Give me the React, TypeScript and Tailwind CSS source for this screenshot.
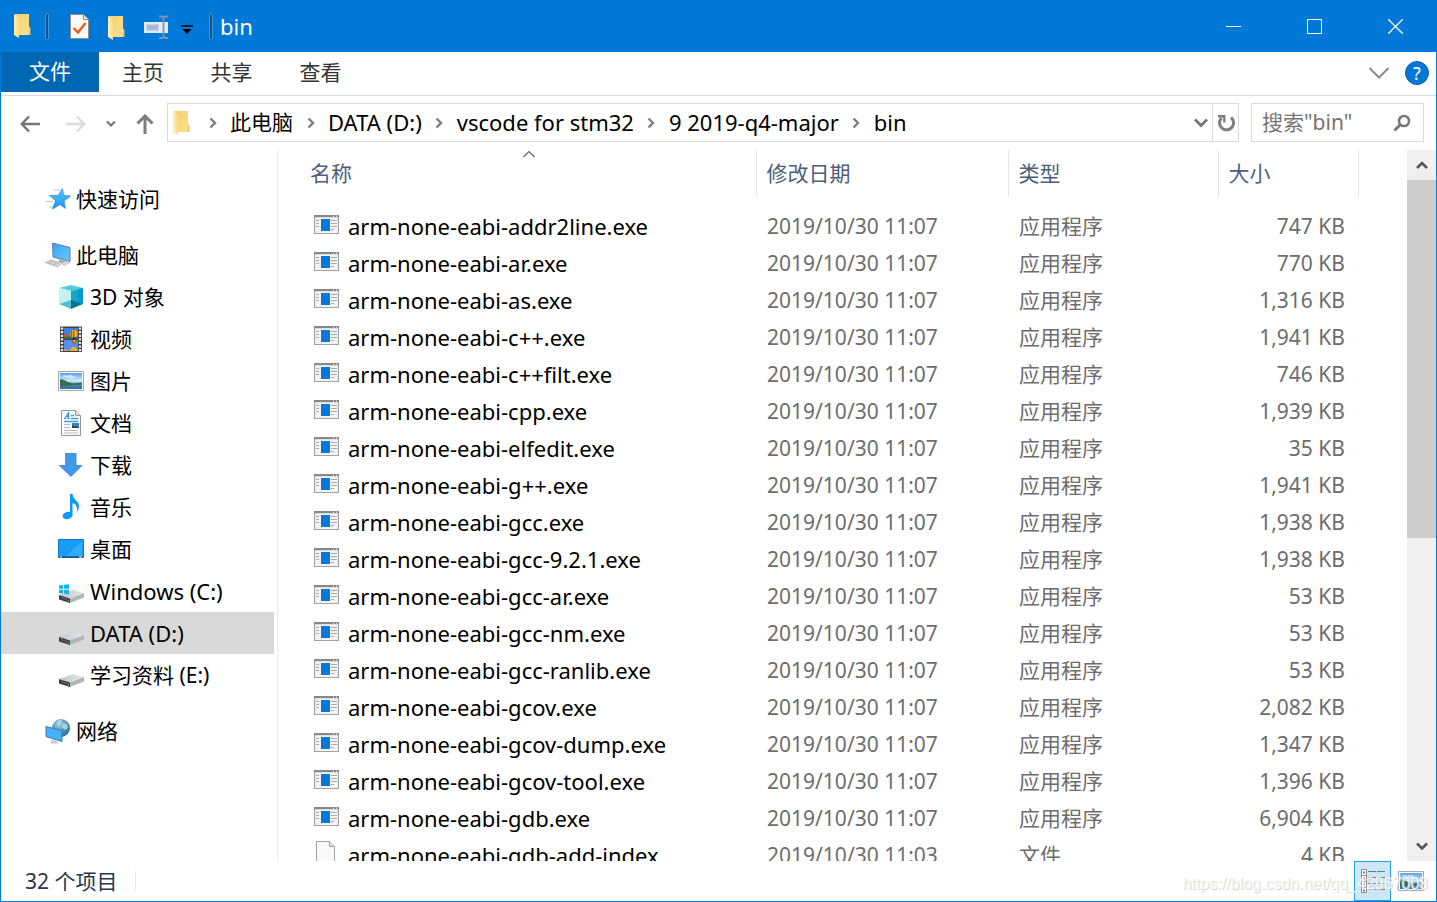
import React from "react";

type IconProps = { className?: string };

const FolderIcon = ({ className }: IconProps) => (
  <svg width="18" height="24" viewBox="0 0 18 24" className={className} aria-hidden="true">
    <defs>
      <linearGradient id="folderBack" x1="0" y1="0" x2="1" y2="1">
        <stop offset="0" stopColor="#f4cf72" />
        <stop offset="1" stopColor="#ffe08c" />
      </linearGradient>
      <linearGradient id="folderFront" x1="0" y1="0" x2="1" y2="0">
        <stop offset="0" stopColor="#fff1b5" />
        <stop offset="1" stopColor="#f9dd85" />
      </linearGradient>
    </defs>
    <path d="M1 0h14v12l1 2v7H4L1 20z" fill="url(#folderBack)" />
    <path d="M1 0l4 4v20l-5-3V1z" fill="url(#folderFront)" />
    <path d="M15.500 13l1 1v7h-2z" fill="#eec35e" />
  </svg>
);

const CheckPageIcon = () => (
  <svg width="20" height="26" viewBox="0 0 20 26" aria-hidden="true">
    <path d="M.5.500h13l5 5v19h-18z" fill="#fafafa" stroke="#8d8d8d" />
    <path d="M13.500.500v5h5" fill="#e2e2e2" stroke="#8d8d8d" />
    <path d="M3.500 14l4.500 4.500L15.500 9" fill="none" stroke="#f0591c" strokeWidth="2.400" />
  </svg>
);

const RenameIcon = () => (
  <svg width="25" height="24" viewBox="0 0 25 24" aria-hidden="true">
    <path d="M0 7h24v11H0z" fill="#e3ebf7" />
    <path d="M2.500 9.500h12v6h-12z" fill="#a9b9d6" />
    <path d="M19.500 2v21M15 1.500h3l1.500 1 1.500-1h3M15 23h3l1.500-1 1.500 1h3" fill="none" stroke="#7f93b4" strokeWidth="1.800" />
  </svg>
);

const Chevron = ({ className }: IconProps) => (
  <svg width="8" height="12" viewBox="0 0 8 12" className={className} aria-hidden="true">
    <path d="M1.500 1.500L6 6l-4.500 4.500" fill="none" stroke="#7d7d7d" strokeWidth="2.400" />
  </svg>
);

const StarIcon = () => (
  <svg width="26" height="26" viewBox="0 0 26 26" aria-hidden="true">
    <defs>
      <linearGradient id="star" x1="0" y1="0" x2="0" y2="1">
        <stop offset="0" stopColor="#5cc6fb" />
        <stop offset="1" stopColor="#1d92e8" />
      </linearGradient>
    </defs>
    <path d="M8 4h7M3 10h5M1 15.500h7M4 21h4" stroke="#9fd0f2" strokeWidth="1.200" />
    <path d="M17.500 2.500l1 7 7 .5-6.500 5 1.500 7.500-5.500-4-7.500 4.500 3-8L5 9.500l8.500-.2z" fill="url(#star)" stroke="#2b8fd8" strokeWidth=".8" />
  </svg>
);

const ComputerIcon = () => (
  <svg width="28" height="26" viewBox="0 0 28 26" aria-hidden="true">
    <defs>
      <linearGradient id="pcScreen" x1="0" y1="0" x2="1" y2="1">
        <stop offset="0" stopColor="#2ea5f8" />
        <stop offset="1" stopColor="#70c8ff" />
      </linearGradient>
    </defs>
    <path d="M8.500 1L26 5.500v14L9 15z" fill="url(#pcScreen)" stroke="#64809a" strokeWidth="1" />
    <path d="M15 17.500l6 1.500-1 2-5-1z" fill="#9da5ad" />
    <path d="M17 21l7-2 2 1.500-6 3z" fill="#d7dbdf" stroke="#a5abb0" strokeWidth=".6" />
    <path d="M1 20.500l6-2.500 11 3L14 25z" fill="#e0e3e6" stroke="#b0b6bb" strokeWidth=".8" />
    <path d="M3.500 20.500l10 3M6 19.300l10 3M9 18.500l-5 3M13 20l-4 3" stroke="#a9b0b6" strokeWidth=".7" />
  </svg>
);

const CubeIcon = () => (
  <svg width="26" height="26" viewBox="0 0 26 26" aria-hidden="true">
    <path d="M1 4L13 1l12 3-12 3z" fill="#56cbdc" />
    <path d="M1 4l12 3v10L1 20z" fill="#c7f1f0" />
    <path d="M25 4L13 7v10l12 3z" fill="#12a5c4" />
    <path d="M25 4l-5 1.300V19l5 1z" fill="#0896d4" />
    <path d="M1 20l12-4v9z" fill="#51c2c8" />
    <path d="M25 20l-12-4v9z" fill="#08758f" />
  </svg>
);

const VideoIcon = () => (
  <svg width="22" height="26" viewBox="0 0 22 26" aria-hidden="true">
    <path d="M0 .5h22V26H0z" fill="#3f3f3f" />
    <path d="M4 2h14v11H4z" fill="#4080e0" />
    <path d="M4 14h14v11H4z" fill="#5590ec" />
    <path d="M2 1.500v24M20 1.500v24" stroke="#e8e8e8" strokeWidth="2.400" strokeDasharray="2.200 1.400" />
    <path d="M4 10l3-1 3 2 4 1 4-1v2H4z" fill="#3c6b34" />
    <ellipse cx="13.800" cy="7.500" rx="3.600" ry="3.800" fill="#f0b51d" />
    <path d="M13.800 3.700v7.600M11.600 4.800v5" stroke="#a73b23" />
    <path d="M13 11.500h2v1.500h-2z" fill="#332714" />
    <circle cx="6" cy="9.500" r="1.800" fill="#e14b43" />
    <path d="M11.500 14h5.500l-2 4h-1.500z" fill="#b63c34" />
    <path d="M13 14h2.500l-1 4z" fill="#efb32a" />
    <path d="M10 25q0-4 3.500-4t3.500 4z" fill="#efb32a" />
    <path d="M4 23l4 1 1 1H4z" fill="#c9a746" />
  </svg>
);

const PictureIcon = () => (
  <svg width="26" height="20" viewBox="0 0 26 20" aria-hidden="true">
    <defs>
      <linearGradient id="sky" x1="0" y1="0" x2="0" y2="1">
        <stop offset="0" stopColor="#5a9fee" />
        <stop offset=".5" stopColor="#d4edf8" />
        <stop offset=".7" stopColor="#508db4" />
        <stop offset="1" stopColor="#2b6b9b" />
      </linearGradient>
    </defs>
    <path d="M.5.500h25v19H.5z" fill="#fff" stroke="#a9a9a9" />
    <path d="M2 2h22v16H2z" fill="url(#sky)" />
    <path d="M2 8l3 .5 5 2.500 5 1.500 9-1v2l-12 1-10 1z" fill="#386c55" />
    <path d="M4 5.500q2-2 5-.5 4-2 7 .5l3 1-6 1z" fill="#eef6fd" opacity=".7" />
  </svg>
);

const DocumentIcon = () => (
  <svg width="20" height="26" viewBox="0 0 20 26" aria-hidden="true">
    <path d="M.5.500h14l5 5v20H.5z" fill="#fbfbfb" stroke="#969696" />
    <path d="M14.500.500v5h5" fill="#e3e3e3" stroke="#969696" />
    <path d="M3 8.500h2M6.500 8.500h2M4 8.500L7.500 3v5.500M5.500 6.500h2" fill="none" stroke="#2a8cd8" strokeWidth="1.200" />
    <path d="M10 5.500h3M10 8.500h7M3 11.500h14" stroke="#3b9fe6" strokeWidth="1.300" />
    <path d="M3 14.500h6M3 17.500h6M3 20.500h14M3 23h14" stroke="#b9b9b9" />
    <path d="M11 13h7v5h-7z" fill="#3b7ec0" />
    <path d="M11 15.500l7 1.500v1h-7z" fill="#274c50" />
  </svg>
);

const DownloadIcon = () => (
  <svg width="24" height="24" viewBox="0 0 24 24" aria-hidden="true">
    <path d="M6.500.500h10.500v12h6L12 23.500.5 12.500h6z" fill="#3f98e8" stroke="#2f84d0" strokeWidth=".8" />
  </svg>
);

const MusicIcon = () => (
  <svg width="18" height="26" viewBox="0 0 18 26" aria-hidden="true">
    <ellipse cx="5.500" cy="21.500" rx="5" ry="3.600" fill="#0a9bf5" transform="rotate(-12 5.500 21.500)" />
    <path d="M8 0h2.500c.5 6 6.500 7 6.500 12 0 3-1.500 5-2.500 6 1.500-5-.5-8-4-9v12.500H8z" fill="#0a9bf5" />
  </svg>
);

const DesktopIcon = () => (
  <svg width="26" height="20" viewBox="0 0 26 20" aria-hidden="true">
    <path d="M.5.500h25v18H.5z" fill="#149cf9" stroke="#1878bd" />
    <path d="M8 17L24 2v15z" fill="#35abfc" />
    <path d="M1 18h24" stroke="#13557f" strokeWidth="1.500" />
    <path d="M2 18h2M21 18h3" stroke="#fff" />
  </svg>
);

const DriveIcon = ({ windows = false }: { windows?: boolean }) => (
  <svg width="26" height="26" viewBox="0 -3 26 26" aria-hidden="true">
    <defs>
      <linearGradient id="driveTop" x1="0" y1="0" x2="1" y2="0">
        <stop offset="0" stopColor="#c4c5c7" />
        <stop offset="1" stopColor="#e6e7e9" />
      </linearGradient>
    </defs>
    <path d="M1 14l14-5 11 3-14 5.500z" fill="url(#driveTop)" />
    <path d="M12 17.500L26 12v4.500L12 22z" fill="#b4b5b8" />
    <path d="M1 14l11 3.500V22L1 18.500z" fill="#3d3e40" />
    <path d="M3 16.500l6 2" stroke="#6b6d6e" strokeWidth="1" />
    <path d="M9.500 18.500l1.500.500v1.500l-1.500-.500z" fill="#38b54a" />
    {windows && (
      <path d="M1 4.500l4-.6v3.900H1zM6 3.800l5-.6v4.600H6zM1 8.800h4v3.900l-4-.6zM6 8.800h5v4.600l-5-.6z" fill="#10b5f0" />
    )}
  </svg>
);

const NetworkIcon = () => (
  <svg width="26" height="26" viewBox="0 0 26 26" aria-hidden="true">
    <defs>
      <radialGradient id="globe" cx=".4" cy=".3" r=".8">
        <stop offset="0" stopColor="#a5d5e8" />
        <stop offset=".6" stopColor="#4789ac" />
        <stop offset="1" stopColor="#2d6a8f" />
      </radialGradient>
    </defs>
    <circle cx="16" cy="10" r="9" fill="url(#globe)" />
    <path d="M12 4q3-3 5-2l-1 3-3 2zM18 5l4 1 1 4-3 2-3-3z" fill="#c0e2e9" opacity=".75" />
    <path d="M1 8.500l16 4v11L1 18.500z" fill="#45b2fb" stroke="#38719b" strokeWidth=".9" />
    <path d="M7 21.500l5 1.500 1 2.500H5z" fill="#c5cbd0" />
  </svg>
);

const ExeIcon = () => (
  <svg width="25" height="20" viewBox="0 0 25 20" aria-hidden="true">
    <path d="M.5.500h24v18H.5z" fill="#f3f3f3" stroke="#a0a2a4" strokeWidth="1.200" />
    <path d="M0 0h25v2.200H0z" fill="#85888a" />
    <path d="M19 1.200h1M22 1.200h1" stroke="#fff" />
    <path d="M7 4h9v12H7z" fill="#0a78d8" />
    <path d="M2 5.500h3M2 8.500h3M2 11.500h3M17 5.500h6M17 8.500h6M17 11.500h6M17 14.500h3" stroke="#aaa" strokeWidth="1.200" />
  </svg>
);

const FileIcon = () => (
  <svg width="20" height="26" viewBox="0 0 20 26" aria-hidden="true">
    <path d="M.5.500h13l5 5v20H.5z" fill="#f9f9f9" stroke="#a2a2a2" />
    <path d="M13.500.500v5h5" fill="#e4e4e4" stroke="#a2a2a2" />
  </svg>
);

const DetailsIcon = () => (
  <svg width="24" height="24" viewBox="0 0 24 24" aria-hidden="true">
    <path d="M.5.500h5v23h-5z" fill="#fff" stroke="#8b8b8b" />
    <path d="M1 6.500h5M1 12.500h5M1 18.500h5" stroke="#8b8b8b" />
    <path d="M2 3.500h2M2 21.500h2" stroke="#6f7f7f" strokeWidth="2" />
    <path d="M2 9.500h2M2 15.500h2" stroke="#d33f2f" strokeWidth="2" />
    <path d="M7 2.500h8M16 2.500h8M7 8.500h8M16 8.500h8M7 14.500h8M16 14.500h8M7 20.500h8M16 20.500h8" stroke="#6f7a80" />
  </svg>
);

const ArrowHead = ({ up = false }: { up?: boolean }) => (
  <svg width="12" height="10" viewBox="0 0 12 10" aria-hidden="true">
    <path d={up ? "M1 8l5-5 5 5" : "M1 2.500l5 5 5-5"} fill="none" stroke="#555" strokeWidth="2.600" />
  </svg>
);

const files: [string, string, string, string][] = [
  ["arm-none-eabi-addr2line.exe", "11:07", "应用程序", "747 KB"],
  ["arm-none-eabi-ar.exe", "11:07", "应用程序", "770 KB"],
  ["arm-none-eabi-as.exe", "11:07", "应用程序", "1,316 KB"],
  ["arm-none-eabi-c++.exe", "11:07", "应用程序", "1,941 KB"],
  ["arm-none-eabi-c++filt.exe", "11:07", "应用程序", "746 KB"],
  ["arm-none-eabi-cpp.exe", "11:07", "应用程序", "1,939 KB"],
  ["arm-none-eabi-elfedit.exe", "11:07", "应用程序", "35 KB"],
  ["arm-none-eabi-g++.exe", "11:07", "应用程序", "1,941 KB"],
  ["arm-none-eabi-gcc.exe", "11:07", "应用程序", "1,938 KB"],
  ["arm-none-eabi-gcc-9.2.1.exe", "11:07", "应用程序", "1,938 KB"],
  ["arm-none-eabi-gcc-ar.exe", "11:07", "应用程序", "53 KB"],
  ["arm-none-eabi-gcc-nm.exe", "11:07", "应用程序", "53 KB"],
  ["arm-none-eabi-gcc-ranlib.exe", "11:07", "应用程序", "53 KB"],
  ["arm-none-eabi-gcov.exe", "11:07", "应用程序", "2,082 KB"],
  ["arm-none-eabi-gcov-dump.exe", "11:07", "应用程序", "1,347 KB"],
  ["arm-none-eabi-gcov-tool.exe", "11:07", "应用程序", "1,396 KB"],
  ["arm-none-eabi-gdb.exe", "11:07", "应用程序", "6,904 KB"],
  ["arm-none-eabi-gdb-add-index", "11:03", "文件", "4 KB"],
];

const places: { label: string; icon: React.ReactNode; selected?: boolean }[] = [
  { label: "3D 对象", icon: <CubeIcon /> },
  { label: "视频", icon: <VideoIcon /> },
  { label: "图片", icon: <PictureIcon /> },
  { label: "文档", icon: <DocumentIcon /> },
  { label: "下载", icon: <DownloadIcon /> },
  { label: "音乐", icon: <MusicIcon /> },
  { label: "桌面", icon: <DesktopIcon /> },
  { label: "Windows (C:)", icon: <DriveIcon windows /> },
  { label: "DATA (D:)", icon: <DriveIcon />, selected: true },
  { label: "学习资料 (E:)", icon: <DriveIcon /> },
];

const crumbs = ["此电脑", "DATA (D:)", "vscode for stm32", "9 2019-q4-major", "bin"];

// Latin labels are set one size up so that they sit evenly beside the Chinese ones.
const labelSize = (text: string) => (/^[ -~]+$/.test(text) ? "text-[22px]" : "text-[21px]");

const RootPlace = ({ label, icon }: { label: string; icon: React.ReactNode }) => (
  <a href="#" className="flex h-[42px] items-center pl-[42px]">
    <span className="flex w-[33px] shrink-0 justify-center pr-1">{icon}</span>
    {label}
  </a>
);

function TitleBar() {
  return (
    <header className="flex h-[52px] shrink-0 items-center bg-[#0078d7] pl-[13px] text-white">
      <FolderIcon />
      <span className="ml-[13px] h-[27px] w-1 rounded-sm border border-[#3f95dd] bg-[#1a5088]" />
      <button aria-label="属性" className="ml-[21px] pt-[2px]"><CheckPageIcon /></button>
      <button aria-label="新建文件夹" className="ml-[18px] pt-1"><FolderIcon /></button>
      <button aria-label="重命名" className="ml-[18px] pt-[2px]"><RenameIcon /></button>
      <button aria-label="自定义快速访问工具栏" className="ml-3 pt-2">
        <svg width="12" height="10" viewBox="0 0 12 10" aria-hidden="true">
          <path d="M0 1h12" stroke="#000" strokeWidth="1.500" />
          <path d="M1.500 4h9L6 9z" fill="#000" />
        </svg>
      </button>
      <span className="ml-4 h-[27px] w-1 rounded-sm border border-[#3f95dd] bg-[#1a5088]" />
      <h1 className="ml-[7px] text-[22px]">bin</h1>
      <div className="ml-auto flex self-stretch">
        <button aria-label="最小化" className="flex w-[81px] items-center justify-center">
          <svg width="15" height="15" aria-hidden="true"><path d="M0 7.500h15" stroke="#fff" /></svg>
        </button>
        <button aria-label="最大化" className="flex w-[81px] items-center justify-center">
          <svg width="15" height="15" aria-hidden="true"><path d="M.5.500h14v14H.5z" stroke="#fff" fill="none" /></svg>
        </button>
        <button aria-label="关闭" className="flex w-[81px] items-center justify-center">
          <svg width="15" height="15" aria-hidden="true"><path d="M0 0l15 15M15 0L0 15" stroke="#fff" strokeWidth="1.300" /></svg>
        </button>
      </div>
    </header>
  );
}

function Ribbon() {
  return (
    <div className="flex h-11 shrink-0 items-start border-b border-[#dadbdc] pr-[7px] text-[#333]">
      <button className="h-10 w-[98px] bg-[#0067b3] pb-[2px] text-white">文件</button>
      <button className="h-10 w-[88px]">主页</button>
      <button className="h-10 w-[89px]">共享</button>
      <button className="h-10 w-[89px]">查看</button>
      <button aria-label="展开功能区" className="ml-auto flex h-[42px] items-center">
        <svg width="22" height="14" viewBox="0 0 22 14" aria-hidden="true">
          <path d="M1.500 2L11 11.500 20.500 2" fill="none" stroke="#8a8a8a" strokeWidth="2" />
        </svg>
      </button>
      <button aria-label="帮助" className="ml-[15px] flex h-[42px] items-center">
        <span className="flex size-6 items-center justify-center rounded-full border border-[#0b5ea8] bg-[#0078d7] text-[18px] leading-none text-white">?</span>
      </button>
    </div>
  );
}

function AddressBar() {
  return (
    <div className="flex h-[54px] shrink-0 items-start pr-3 pt-[7px]">
      <div className="flex h-[39px] w-[166px] shrink-0 items-center pl-[19px] pt-[2px]">
        <button aria-label="后退">
          <svg width="20" height="18" viewBox="0 0 20 18" aria-hidden="true">
            <path d="M20 9H2M9 1.500L1.800 9 9 16.500" fill="none" stroke="#757575" strokeWidth="2.400" />
          </svg>
        </button>
        <button aria-label="前进" className="ml-[26px]">
          <svg width="20" height="18" viewBox="0 0 20 18" aria-hidden="true">
            <path d="M0 9h18M11 1.500L18.200 9 11 16.500" fill="none" stroke="#dcdcdc" strokeWidth="2.400" />
          </svg>
        </button>
        <button aria-label="最近位置" className="ml-5">
          <svg width="10" height="8" viewBox="0 0 10 8" aria-hidden="true">
            <path d="M1 1.500L5 5.500l4-4" fill="none" stroke="#777" strokeWidth="2.200" />
          </svg>
        </button>
        <button aria-label="上移" className="ml-5">
          <svg width="18" height="20" viewBox="0 0 18 20" aria-hidden="true">
            <path d="M9 20V2.500M1.500 9.500L9 2l7.500 7.500" fill="none" stroke="#7d7d7d" strokeWidth="3" />
          </svg>
        </button>
      </div>
      <div className="flex h-[39px] min-w-0 flex-1 items-center border border-[#d9d9d9] pl-[5px]">
        <FolderIcon className="mr-1 shrink-0" />
        {crumbs.map((crumb) => (
          <React.Fragment key={crumb}>
            <span className="flex w-[35px] shrink-0 justify-center"><Chevron /></span>
            <a href="#" className={`whitespace-nowrap pb-[2px] text-black ${labelSize(crumb)}`}>{crumb}</a>
          </React.Fragment>
        ))}
        <button aria-label="以前的位置" className="ml-auto pr-1">
          <svg width="14" height="10" viewBox="0 0 14 10" aria-hidden="true">
            <path d="M1 1.500l6 6 6-6" fill="none" stroke="#777" strokeWidth="2.800" />
          </svg>
        </button>
        <button aria-label="刷新" className="flex h-full w-[26px] items-center justify-center border-l border-[#d9d9d9]">
          <svg width="18" height="18" viewBox="0 0 18 18" aria-hidden="true">
            <path d="M14 3.500A7 7 0 1 1 4.500 4" fill="none" stroke="#7d7d7d" strokeWidth="3" />
            <path d="M1 1h7.500v7.500H6.200V3.400H1z" fill="#7d7d7d" />
          </svg>
        </button>
      </div>
      <label className="ml-3 flex h-[39px] w-[173px] items-center border border-[#d9d9d9] pl-[10px] pr-3">
        <input aria-label="搜索" placeholder='搜索"bin"' className="min-w-0 flex-1 bg-transparent pb-[2px] outline-none placeholder:text-[#757575]" />
        <svg width="18" height="18" viewBox="0 0 18 18" aria-hidden="true">
          <circle cx="11" cy="7" r="5" fill="none" stroke="#777" strokeWidth="2.600" />
          <path d="M7.500 10.500L1.500 16.500" stroke="#777" strokeWidth="3" />
        </svg>
      </label>
    </div>
  );
}

function Sidebar() {
  return (
    <nav className="flex w-[277px] shrink-0 flex-col gap-[14px] overflow-hidden border-r border-[#ededed] pr-[3px] pt-7 text-black">
      <RootPlace label="快速访问" icon={<StarIcon />} />
      <div>
        <RootPlace label="此电脑" icon={<ComputerIcon />} />
        {places.map((place) => (
          <a
            key={place.label}
            href="#"
            className={`flex h-[42px] items-center pl-[56px] ${labelSize(place.label)} ${place.selected ? "bg-[#d9d9d9]" : ""}`}
          >
            <span className="flex w-[33px] shrink-0 justify-center pr-[6px]">{place.icon}</span>
            {place.label}
          </a>
        ))}
      </div>
      <RootPlace label="网络" icon={<NetworkIcon />} />
    </nav>
  );
}

function FileTable() {
  return (
    <div className="min-w-0 flex-1 overflow-hidden">
      <table className="w-full table-fixed border-collapse text-left">
        <colgroup>
          <col className="w-[22px]" />
          <col className="w-[456px]" />
          <col className="w-[252px]" />
          <col className="w-[210px]" />
          <col className="w-[140px]" />
          <col />
        </colgroup>
        <thead>
          <tr className="h-[47px] text-[#4c607a]">
            <td />
            <th className="relative border-r border-[#e5e5e5] pb-[2px] pl-[10px] font-normal">
              名称
              <svg width="12" height="8" viewBox="0 0 12 8" className="absolute left-1/2 top-0 -ml-[5px]" aria-hidden="true">
                <path d="M.5 7L6 1.500 11.500 7" fill="none" stroke="#666" strokeWidth="1.200" />
              </svg>
            </th>
            <th className="border-r border-[#e5e5e5] pb-[2px] pl-[10px] font-normal">修改日期</th>
            <th className="border-r border-[#e5e5e5] pb-[2px] pl-[10px] font-normal">类型</th>
            <th className="border-r border-[#e5e5e5] pb-[2px] pl-[10px] font-normal">大小</th>
            <td />
          </tr>
        </thead>
        <tbody className="text-[#6d6d6d]">
          <tr className="h-[10px]"><td colSpan={6} /></tr>
          {files.map(([name, time, kind, size]) => (
            <tr key={name} className="h-[37px]">
              <td />
              <td className="p-0 pl-[14px] text-[22px] text-black">
                <div className="flex h-[37px] items-center">
                  <span className="flex w-[34px] shrink-0 pb-[2px]">
                    {kind === "文件" ? <span className="pl-[2px]"><FileIcon /></span> : <ExeIcon />}
                  </span>
                  {name}
                </div>
              </td>
              <td className="p-0 pl-[11px]">2019/10/30 {time}</td>
              <td className="p-0 pl-[11px]">{kind}</td>
              <td className="p-0 pr-[13px] text-right">{size}</td>
              <td />
            </tr>
          ))}
        </tbody>
      </table>
    </div>
  );
}

function ScrollBar() {
  return (
    <div className="flex w-[29px] shrink-0 flex-col bg-[#f0f0f0]">
      <button aria-label="向上滚动" className="flex h-[30px] items-center justify-center"><ArrowHead up /></button>
      <div className="flex flex-1 flex-col">
        <div className="h-[55%] bg-[#cdcdcd]" />
      </div>
      <button aria-label="向下滚动" className="flex h-[30px] items-center justify-center"><ArrowHead /></button>
    </div>
  );
}

function StatusBar() {
  return (
    <footer className="relative flex h-10 shrink-0 items-center pl-6 pr-3 text-[#26374f]">
      <span>32 个项目</span>
      <span className="ml-[18px] h-5 w-px bg-[#ececec]" />
      <button aria-label="详细信息" className="ml-auto flex h-10 w-[37px] items-center justify-center border border-[#26a0da] bg-[#cce8f6]">
        <DetailsIcon />
      </button>
      <button aria-label="大缩略图" className="ml-[7px]"><PictureIcon /></button>
      <span className="pointer-events-none absolute bottom-[5px] right-2 font-['Liberation_Sans',sans-serif] text-[16px] leading-6 text-white/80 [text-shadow:1px_1px_1px_#d0d0d0]">
        https://blog.csdn.net/qq_42967008
      </span>
    </footer>
  );
}

export default function App() {
  return (
    <div className="flex h-screen w-full flex-col overflow-hidden border-x border-b border-[#0078d7] bg-white font-['Noto_Sans','Noto_Sans_CJK_SC',sans-serif] text-[21px] leading-7">
      <TitleBar />
      <Ribbon />
      <AddressBar />
      <main className="flex min-h-0 flex-1">
        <Sidebar />
        <FileTable />
        <ScrollBar />
      </main>
      <StatusBar />
    </div>
  );
}
